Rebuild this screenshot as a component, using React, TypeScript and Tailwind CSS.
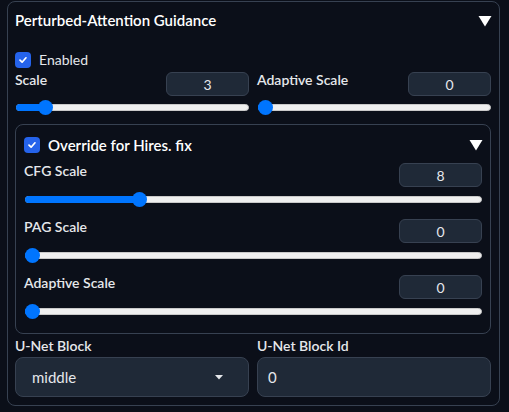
import React from "react";

const font = { fontFamily: "Lato, 'Noto Sans', sans-serif" };

function Check({ size = 16 }: { size?: number }) {
  return (
    <div
      className="flex items-center justify-center rounded-[4px] bg-[#2563eb]"
      style={{ width: size, height: size }}
    >
      <svg width="10" height="10" viewBox="0 0 10 10">
        <path d="M2 5.2 L4.1 7.2 L8 2.8" stroke="white" strokeWidth="1.7" fill="none" strokeLinecap="round" strokeLinejoin="round" />
      </svg>
    </div>
  );
}

function Slider({ pct }: { pct: number }) {
  return (
    <div className="relative h-[22px] w-full">
      <div className="absolute left-[1px] right-0 top-[8px] h-[7px] rounded-full border border-[#c9c9c9] bg-[#efefef]" />
      <div
        className="absolute left-[1px] top-[8px] h-[7px] rounded-l-full bg-[#0075ff]"
        style={{ width: `calc((100% - 16px) * ${pct} + 8px)` }}
      />
      <div
        className="absolute top-[3.5px] h-[15px] w-[15px] rounded-full bg-[#0075ff]"
        style={{ left: `calc((100% - 16px) * ${pct} + 1px)` }}
      />
    </div>
  );
}

function NumBox({ value, w = "w-[83px]" }: { value: string; w?: string }) {
  return (
    <div className={`${w} flex h-[24px] items-center justify-center rounded-[6px] border border-[#374151] bg-[#1f2937] text-[14px] text-[#e5e7eb]`}>
      {value}
    </div>
  );
}

function InnerRow({ label, value, pct, h }: { label: string; value: string; pct: number; h: string }) {
  return (
    <div className={`${h} flex flex-col`}>
      <div className="flex items-start justify-between">
        <span className="mt-[-2px] text-[14px] font-semibold leading-[20px] text-[#e5e7eb]">{label}</span>
        <NumBox value={value} />
      </div>
      <div className="mt-[1px]">
        <Slider pct={pct} />
      </div>
    </div>
  );
}

export default function App() {
  return (
    <div className="h-[412px] w-[509px] bg-[#0b0f19] pt-[1px]" style={font}>
      <div className="ml-[7px] h-[405px] w-[493px] rounded-lg border border-[#374151] bg-[#0b0f19] pl-[7px] pr-[8px]">
        {/* Title */}
        <div className="flex h-[36px] items-center justify-between pt-[1px]">
          <span className="text-[15px] font-semibold text-white">Perturbed-Attention Guidance</span>
          <svg width="14" height="12" viewBox="0 0 14 12" className="mr-[-1px]">
            <path d="M0.5 1 L13.5 1 L7 11.5 Z" fill="white" />
          </svg>
        </div>
        {/* Enabled */}
        <div className="mt-[9px] flex h-[25px] items-center gap-[8px]">
          <Check />
          <span className="text-[14px] text-[#e5e7eb]">Enabled</span>
        </div>
        {/* Scale row */}
        <div className="grid grid-cols-2 gap-[8px]">
          <div className="flex flex-col">
            <div className="flex items-start justify-between">
              <span className="mt-[-2px] text-[14px] font-semibold leading-[20px] text-[#e5e7eb]">Scale</span>
              <NumBox value="3" />
            </div>
            <Slider pct={0.1} />
          </div>
          <div className="flex flex-col">
            <div className="flex items-start justify-between">
              <span className="mt-[-2px] text-[14px] font-semibold leading-[20px] text-[#e5e7eb]">Adaptive Scale</span>
              <NumBox value="0" />
            </div>
            <Slider pct={0} />
          </div>
        </div>
        {/* Inner box */}
        <div className="mt-[6px] h-[210px] rounded-lg border border-[#374151] px-[8px]">
          <div className="flex h-[38px] items-center justify-between pt-[2px]">
            <div className="flex items-center gap-[8px]">
              <Check />
              <span className="text-[15px] font-semibold text-white">Override for Hires. fix</span>
            </div>
            <svg width="14" height="12" viewBox="0 0 14 12" className="mr-[-1px]">
              <path d="M0.5 1 L13.5 1 L7 11.5 Z" fill="white" />
            </svg>
          </div>
          <InnerRow label="CFG Scale" value="8" pct={7 / 29} h="h-[56px]" />
          <InnerRow label="PAG Scale" value="0" pct={0} h="h-[56px]" />
          <InnerRow label="Adaptive Scale" value="0" pct={0} h="h-[58px]" />
        </div>
        {/* U-Net */}
        <div className="grid grid-cols-2 gap-[8px]">
          <div className="flex flex-col">
            <span className="flex h-[23px] items-center text-[14px] font-semibold text-[#e5e7eb]">U-Net Block</span>
            <div className="flex h-[40px] items-center justify-between rounded-lg border border-[#374151] bg-[#1f2937] pl-[16px] pr-[25px]">
              <span className="text-[15px] text-[#e5e7eb]">middle</span>
              <svg width="8" height="5" viewBox="0 0 8 5">
                <path d="M0 0 L8 0 L4 4.5 Z" fill="#e5e7eb" />
              </svg>
            </div>
          </div>
          <div className="flex flex-col">
            <span className="flex h-[23px] items-center text-[14px] font-semibold text-[#e5e7eb]">U-Net Block Id</span>
            <div className="flex h-[40px] items-center rounded-lg border border-[#374151] bg-[#1f2937] pl-[10px]">
              <span className="text-[15px] text-[#e5e7eb]">0</span>
            </div>
          </div>
        </div>
      </div>
    </div>
  );
}
